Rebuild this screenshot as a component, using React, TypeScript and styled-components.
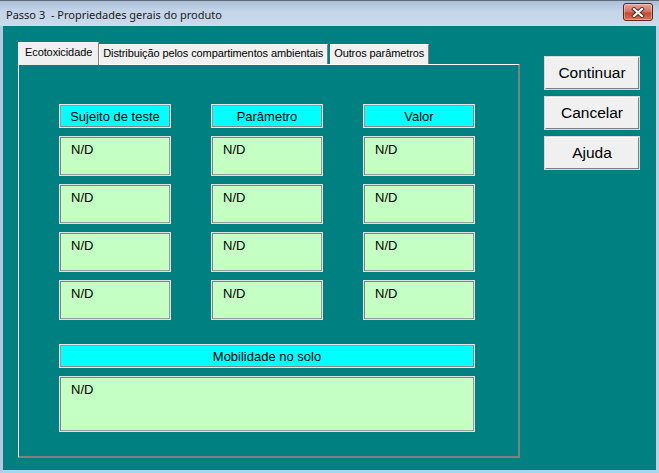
import React from "react";
import styled, { createGlobalStyle } from "styled-components";

const GlobalStyle = createGlobalStyle`
  html, body {
    margin: 0;
    padding: 0;
    background: #008080;
  }
  #root {
    width: 659px;
    height: 473px;
  }
`;

const Window = styled.div`
  width: 659px;
  height: 473px;
  box-sizing: border-box;
  display: flex;
  flex-direction: column;
  background: #b9cee6;
  border-left: 3px solid #b3c9e2;
  border-right: 3px solid #bcd0e8;
  border-bottom: 3px solid #9fd9ee;
  font-family: "Liberation Sans", Arial, sans-serif;
`;

const TitleBar = styled.div`
  height: 26px;
  flex: 0 0 26px;
  display: flex;
  align-items: center;
  justify-content: space-between;
  background: linear-gradient(#a9bfd9, #c4d5e9 40%, #cbdaec);
  border-top: 1px solid #5e6a78;
  box-sizing: border-box;
  margin: 0 -3px;
  padding: 0 6px;
`;

const Title = styled.span`
  font-family: "Noto Sans", "Liberation Sans", sans-serif;
  font-size: 11px;
  color: #1a1a1a;
  white-space: pre;
  margin-top: 1px;
`;

const CloseButton = styled.div`
  width: 30px;
  height: 18px;
  box-sizing: border-box;
  border: 1px solid #5a2420;
  border-radius: 3px;
  background: linear-gradient(#e8a89a, #d2705c 50%, #c04a34 55%, #d9755a);
  display: flex;
  align-items: center;
  justify-content: center;
  margin-top: -3px;
  box-shadow: inset 0 0 0 1px rgba(255, 255, 255, 0.35);
`;

const Body = styled.div`
  flex: 1;
  display: flex;
  background: #008080;
  padding: 15px 0 0 15px;
`;

const TabArea = styled.div`
  width: 502px;
  display: flex;
  flex-direction: column;
`;

const TabStrip = styled.div`
  display: flex;
  align-items: flex-end;
  height: 23px;
`;

const Tab = styled.div<{ $active?: boolean; $gap?: boolean }>`
  box-sizing: border-box;
  height: ${p => (p.$active ? "23px" : "20px")};
  padding: ${p => (p.$active ? "3px 6px 0 6px" : "2px 4px 0 3px")};
  margin-left: ${p => (p.$gap ? "2px" : "0")};
  background: #f0f0f0;
  border-top: 1px solid #ffffff;
  border-left: 1px solid #ffffff;
  border-right: 1px solid #808080;
  font-size: 11px;
  letter-spacing: -0.1px;
  color: #000;
  white-space: nowrap;
  position: relative;
  z-index: ${p => (p.$active ? 1 : 0)};
  margin-bottom: ${p => (p.$active ? "-1px" : "0")};
`;

const Panel = styled.div`
  box-sizing: border-box;
  height: 394px;
  border-top: 1px solid #ffffff;
  border-left: 1px solid #ffffff;
  border-right: 2px solid #808080;
  border-bottom: 2px solid #808080;
  padding: 39px 0 0 40px;
  display: flex;
  flex-direction: column;
`;

const Grid = styled.div`
  display: grid;
  grid-template-columns: repeat(3, 112px);
  column-gap: 40px;
  row-gap: 8px;
  grid-template-rows: 24px repeat(4, 40px);
`;

const HeaderCell = styled.div<{ $wide?: boolean }>`
  box-sizing: border-box;
  width: ${p => (p.$wide ? "416px" : "auto")};
  height: 24px;
  background: #00ffff;
  border: 1px solid #e6e6e6;
  box-shadow: inset -1px -1px 0 #8a8a8a, inset 1px 1px 0 #9a9a9a;
  display: flex;
  align-items: center;
  justify-content: center;
  font-size: 13px;
  color: #000;
`;

const ValueBox = styled.div<{ $tall?: boolean }>`
  box-sizing: border-box;
  height: ${p => (p.$tall ? "56px" : "40px")};
  background: #c4ffc4;
  border: 1px solid #e0e0e0;
  box-shadow: inset 1px 1px 0 #808080, inset -1px -1px 0 #9a9a9a;
  padding: 5px 0 0 11px;
  font-size: 13px;
  color: #000;
`;

const Mobility = styled.div`
  display: flex;
  flex-direction: column;
  gap: 8px;
  width: 416px;
  margin-top: 24px;
`;

const ButtonColumn = styled.div`
  display: flex;
  flex-direction: column;
  gap: 8px;
  margin-left: 25px;
  padding-top: 16px;
`;

const DialogButton = styled.button`
  box-sizing: border-box;
  width: 94px;
  height: 32px;
  background: #f0f0f0;
  border: 1px solid #ffffff;
  border-right-color: #808080;
  border-bottom-color: #808080;
  box-shadow: 0 0 0 1px #d8d8d8;
  font-family: "Liberation Sans", Arial, sans-serif;
  font-size: 15.5px;
  color: #000;
  padding: 0;
`;

const subjects = ["Sujeito de teste", "Parâmetro", "Valor"];

export default function App() {
  return (
    <>
      <GlobalStyle />
      <Window>
        <TitleBar>
          <Title>Passo 3  - Propriedades gerais do produto</Title>
          <CloseButton>
            <svg width="14" height="11" viewBox="0 0 14 11">
              <path d="M3 2 L11 9 M11 2 L3 9" stroke="#4a2a28" strokeWidth="4" strokeLinecap="square" />
              <path d="M3 2 L11 9 M11 2 L3 9" stroke="#ffffff" strokeWidth="2.2" strokeLinecap="square" />
            </svg>
          </CloseButton>
        </TitleBar>
        <Body>
          <TabArea>
            <TabStrip>
              <Tab $active>Ecotoxicidade</Tab>
              <Tab>Distribuição pelos compartimentos ambientais</Tab>
              <Tab $gap>Outros parâmetros</Tab>
            </TabStrip>
            <Panel>
              <Grid>
                {subjects.map(s => (
                  <HeaderCell key={s}>{s}</HeaderCell>
                ))}
                {Array.from({ length: 12 }).map((_, i) => (
                  <ValueBox key={i}>N/D</ValueBox>
                ))}
              </Grid>
              <Mobility>
                <HeaderCell $wide>Mobilidade no solo</HeaderCell>
                <ValueBox $tall>N/D</ValueBox>
              </Mobility>
            </Panel>
          </TabArea>
          <ButtonColumn>
            <DialogButton>Continuar</DialogButton>
            <DialogButton>Cancelar</DialogButton>
            <DialogButton>Ajuda</DialogButton>
          </ButtonColumn>
        </Body>
      </Window>
    </>
  );
}
